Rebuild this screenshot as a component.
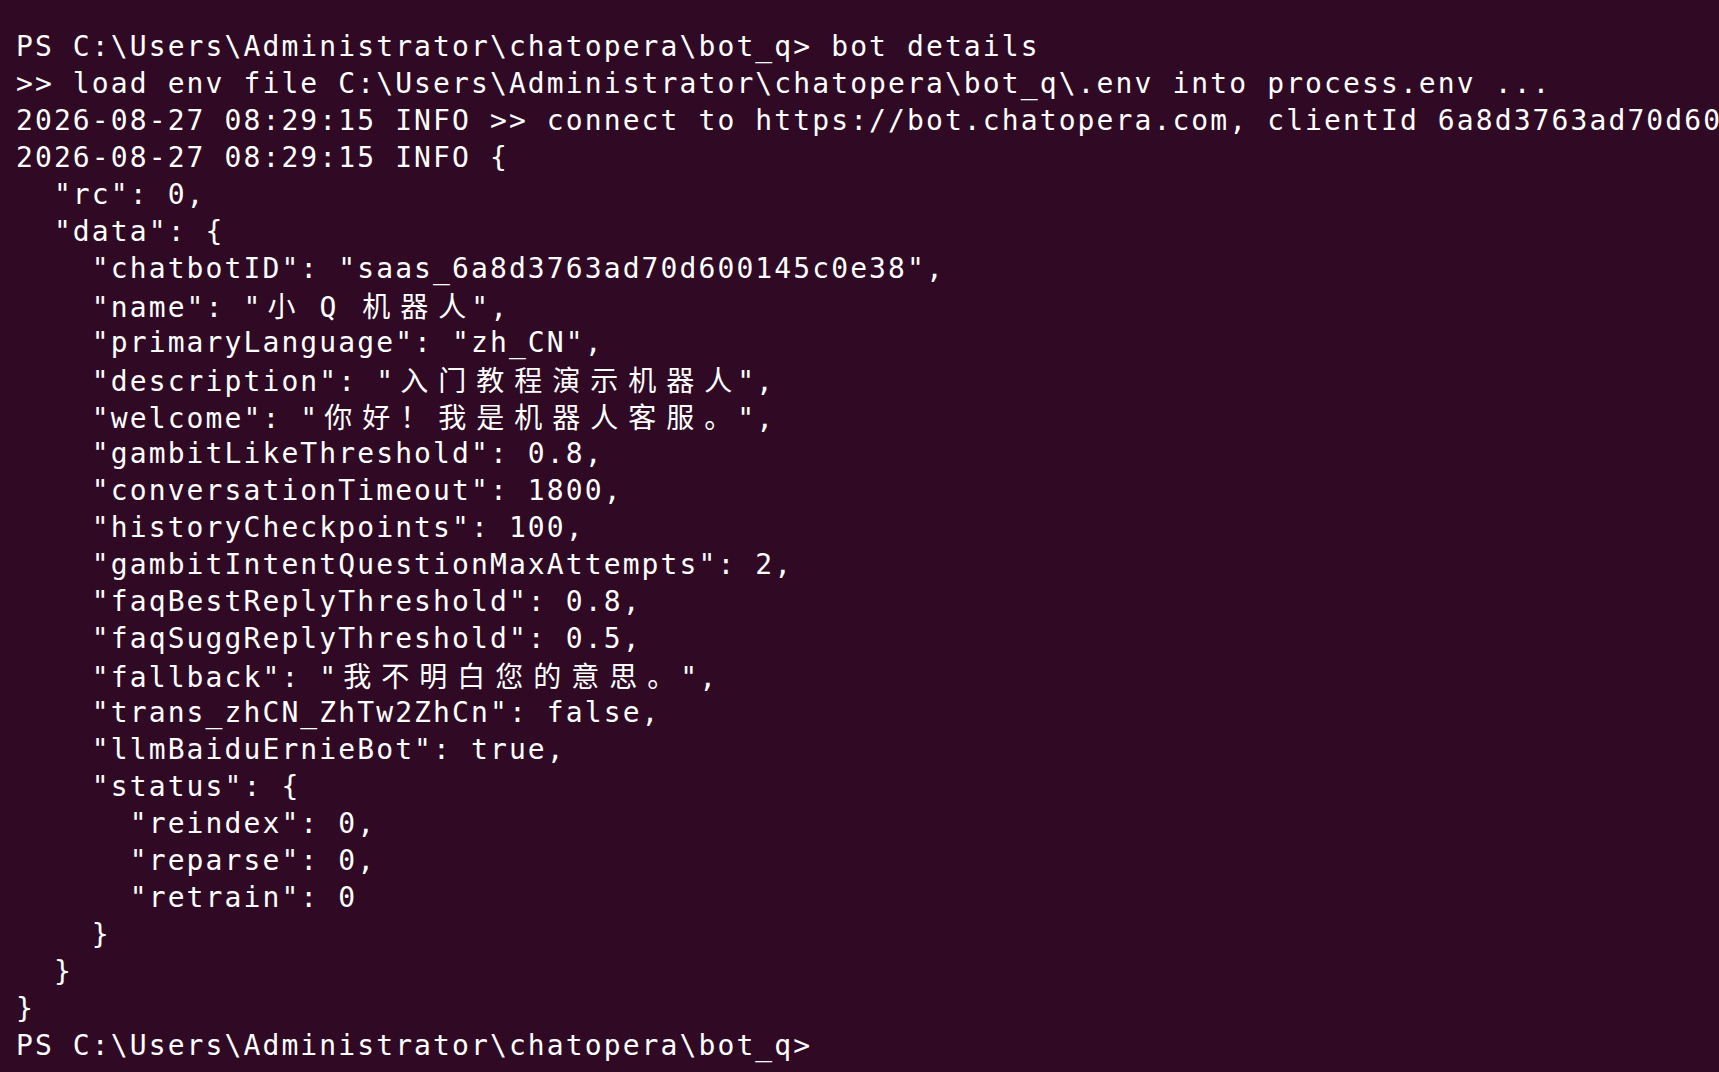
import React from "react";

const lines: string[] = [
  "PS C:\\Users\\Administrator\\chatopera\\bot_q> bot details",
  ">> load env file C:\\Users\\Administrator\\chatopera\\bot_q\\.env into process.env ...",
  "2026-08-27 08:29:15 INFO >> connect to https://bot.chatopera.com, clientId 6a8d3763ad70d600145c0e38",
  "2026-08-27 08:29:15 INFO {",
  '  "rc": 0,',
  '  "data": {',
  '    "chatbotID": "saas_6a8d3763ad70d600145c0e38",',
  '    "name": "小 Q 机器人",',
  '    "primaryLanguage": "zh_CN",',
  '    "description": "入门教程演示机器人",',
  '    "welcome": "你好！我是机器人客服。",',
  '    "gambitLikeThreshold": 0.8,',
  '    "conversationTimeout": 1800,',
  '    "historyCheckpoints": 100,',
  '    "gambitIntentQuestionMaxAttempts": 2,',
  '    "faqBestReplyThreshold": 0.8,',
  '    "faqSuggReplyThreshold": 0.5,',
  '    "fallback": "我不明白您的意思。",',
  '    "trans_zhCN_ZhTw2ZhCn": false,',
  '    "llmBaiduErnieBot": true,',
  '    "status": {',
  '      "reindex": 0,',
  '      "reparse": 0,',
  '      "retrain": 0',
  "    }",
  "  }",
  "}",
  "PS C:\\Users\\Administrator\\chatopera\\bot_q>",
];

function isWide(ch: string) {
  const c = ch.codePointAt(0) || 0;
  return c >= 0x2e80;
}

function Line({ text }: { text: string }) {
  const parts: React.ReactNode[] = [];
  let buf = "";
  let k = 0;
  for (const ch of Array.from(text)) {
    if (isWide(ch)) {
      if (buf) {
        parts.push(<span key={k++}>{buf}</span>);
        buf = "";
      }
      parts.push(
        <span
          key={k++}
          className="inline-block w-[38px] text-center text-[28px] tracking-normal font-['Noto_Sans_CJK_SC',sans-serif]"
        >
          {ch}
        </span>
      );
    } else {
      buf += ch;
    }
  }
  if (buf) parts.push(<span key={k++}>{buf}</span>);
  return <div className="h-[37px] whitespace-pre">{parts.length ? parts : " "}</div>;
}

export default function App() {
  return (
    <div className="w-full h-[1072px] overflow-hidden bg-[#300a24] text-white pl-[16px] pt-[28px] font-['DejaVu_Sans_Mono',monospace] text-[28px] leading-[37px] tracking-[2.1px]">
      {lines.map((l, i) => (
        <Line key={i} text={l} />
      ))}
    </div>
  );
}
